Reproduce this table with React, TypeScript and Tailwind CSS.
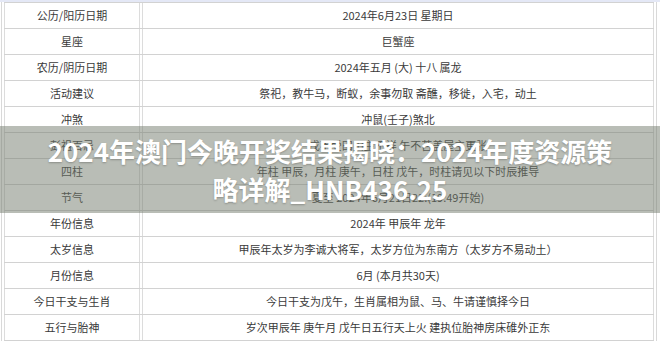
import React from "react";

const rows: [string, string][] = [
  ["公历/阳历日期", "2024年6月23日 星期日"],
  ["星座", "巨蟹座"],
  ["农历/阴历日期", "2024年五月 (大) 十八 属龙"],
  ["活动建议", "祭祀，教牛马，断蚁，余事勿取 斋醮，移徙，入宅，动土"],
  ["冲煞", "冲鼠(壬子)煞北"],
  ["彭祖百忌", "戊不受田田主不祥 午不苫盖屋主更张"],
  ["四柱", "年柱 甲辰，月柱 庚午，日柱 戊午，时柱请见以下时辰推导"],
  ["节气", "夏至 2024年6月21日22:(19:49开始)"],
  ["年份信息", "2024年 甲辰年 龙年"],
  ["太岁信息", "甲辰年太岁为李诚大将军，太岁方位为东南方（太岁方不易动土）"],
  ["月份信息", "6月 (本月共30天)"],
  ["今日干支与生肖", "今日干支为戊午，生肖属相为鼠、马、牛请谨慎择今日"],
  ["五行与胎神", "岁次甲辰年 庚午月 戊午日五行天上火 建执位胎神房床碓外正东"],
];

export default function App() {
  return (
    <div
      className="relative w-[660px] h-[345px] overflow-hidden bg-white text-[#3a3a3a]"
      style={{ fontFamily: '"Noto Sans CJK SC", "Noto Sans", sans-serif' }}
    >
      <div className="h-[2px] bg-[#e4e8f6]" />
      <div className="mx-[1px] w-[656px] border-x border-[#d9d9d9] px-[2px]">
        {rows.map(([k, v], i) => (
          <div
            key={i}
            className={`flex ${i === 0 ? "h-[27px] border-t" : "h-[26px]"} border-b border-[#d2d2d2]`}
          >
            <div className="w-[136px] flex items-center justify-center border-x border-[#dcdcdc] text-[11px] leading-none">
              {k}
            </div>
            <div className="w-[2px]" />
            <div className="flex-1 flex items-center justify-center border-x border-[#dcdcdc] text-[11px] leading-none">
              {v}
            </div>
          </div>
        ))}
      </div>
      <div className="absolute left-0 right-0 top-[126px] h-[87px] bg-[rgba(115,124,110,0.5)] flex items-center justify-center px-[40px]">
        <div className="text-white font-bold text-[26px] leading-[38px] text-center [text-shadow:0_1px_2px_rgba(0,0,0,0.25)] tracking-[0px]">
          2024年澳门今晚开奖结果揭晓：2024年度资源策略详解_HNB436.25
        </div>
      </div>
    </div>
  );
}
